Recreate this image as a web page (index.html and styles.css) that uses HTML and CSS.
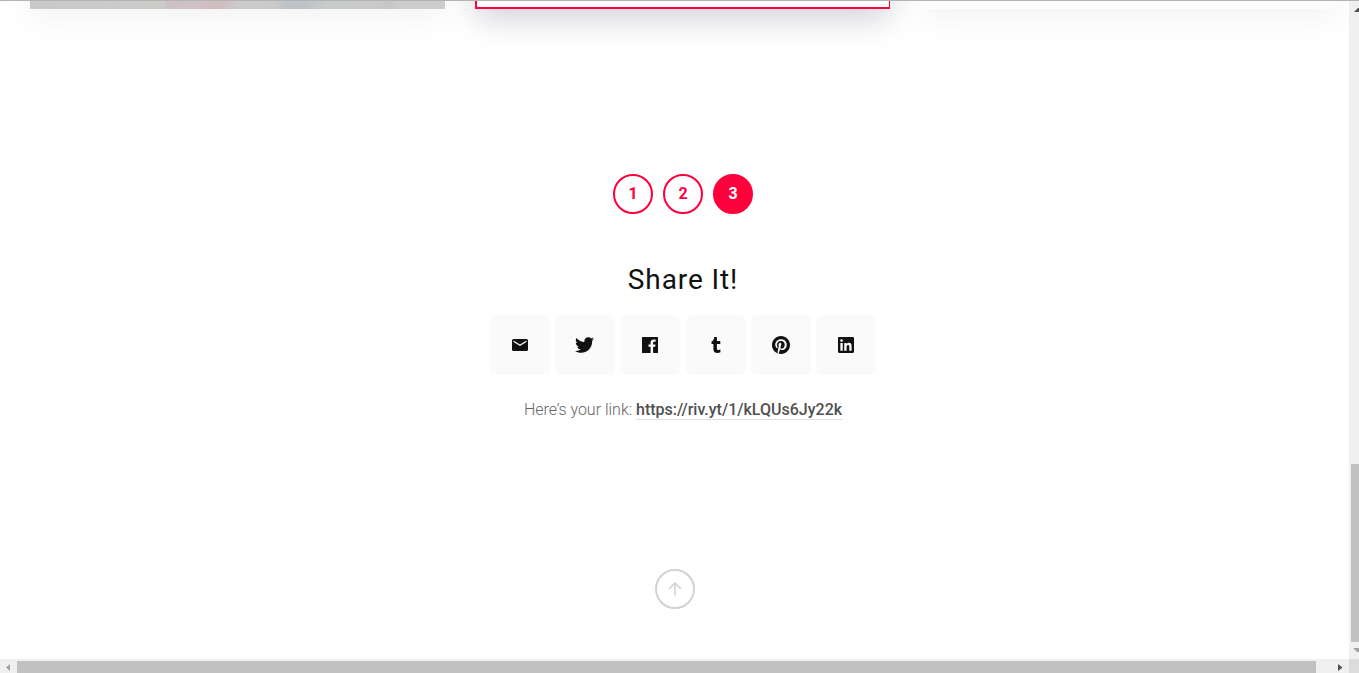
FILE: index.html
```html
<!DOCTYPE html>
<html lang="en">
  <head>
    <meta charset="UTF-8" />
    <meta name="viewport" content="width=device-width, initial-scale=1.0" />
    <title>Share It!</title>
    <link rel="stylesheet" href="styles.css">
  </head>
  <body>
    <div class="window">
      <main class="page">
        <div class="content">
          <section class="cards">
            <div class="card card-image"></div>
            <div class="card card-active"></div>
            <div class="card"></div>
          </section>

          <nav class="pagination">
            <a href="#" class="page-number">1</a>
            <a href="#" class="page-number">2</a>
            <a href="#" class="page-number current">3</a>
          </nav>

          <section class="share">
            <h2>Share It!</h2>
            <div class="share-buttons">
              <a href="#" class="share-button" aria-label="Email">
                <svg width="16" height="12" viewBox="0 0 16 12"><path d="M1.500 0h13A1.500 1.500 0 0 1 16 1.500v9a1.500 1.500 0 0 1-1.500 1.500h-13A1.500 1.500 0 0 1 0 10.500v-9A1.500 1.500 0 0 1 1.500 0zM8 7.100l6.400-4V1.600L8 5.600l-6.400-4v1.500z"/></svg>
              </a>
              <a href="#" class="share-button" aria-label="Twitter">
                <svg width="20" height="20" viewBox="1.500 1.500 22 22"><path d="M22.460 6c-.77.350-1.600.580-2.460.690.880-.530 1.560-1.370 1.880-2.380-.83.500-1.750.850-2.720 1.050C18.370 4.500 17.260 4 16 4c-2.350 0-4.270 1.920-4.270 4.290 0 .340.040.670.110.980C8.280 9.090 5.110 7.380 3 4.790c-.37.630-.58 1.370-.58 2.150 0 1.490.75 2.810 1.910 3.560-.71 0-1.370-.2-1.950-.5v.030c0 2.080 1.480 3.820 3.440 4.210a4.220 4.220 0 0 1-1.930.070 4.280 4.280 0 0 0 4 2.980 8.521 8.521 0 0 1-5.330 1.840c-.34 0-.68-.02-1.020-.06C3.440 20.290 5.700 21 8.120 21 16 21 20.330 14.460 20.330 8.790c0-.19 0-.37-.01-.56.840-.6 1.560-1.360 2.140-2.230z"/></svg>
              </a>
              <a href="#" class="share-button" aria-label="Facebook">
                <svg width="16" height="16" viewBox="0 0 16 16"><path d="M.5 0h15a.5.5 0 0 1 .5.500v15a.5.5 0 0 1-.5.500H11.100V9.800h2.100l.3-2.400h-2.400V5.900c0-.7.200-1.200 1.200-1.200h1.300V2.500c-.2 0-1-.1-1.900-.1-1.900 0-3.100 1.100-3.100 3.200v1.800H6.500v2.400h2.100V16H.5a.5.5 0 0 1-.5-.5V.500A.5.5 0 0 1 .5 0z"/></svg>
              </a>
              <a href="#" class="share-button" aria-label="Tumblr">
                <svg width="16" height="16" viewBox="0 0 16 16"><path d="M6.200 0h2.700v4h3.400v3H8.900v4.300c0 1.300.5 1.800 1.500 1.800.8 0 1.400-.2 2-.5v2.700c-.8.400-1.800.7-3 .7-2.600 0-4-1.300-4-3.900V7H3.500V4.500C5.200 4 6 2.700 6.200 0z"/></svg>
              </a>
              <a href="#" class="share-button" aria-label="Pinterest">
                <svg width="18" height="18" viewBox="0 0 24 24"><path d="M12 0C5.370 0 0 5.370 0 12c0 5.080 3.160 9.420 7.620 11.170-.1-.95-.2-2.410.040-3.440l1.410-5.960s-.36-.72-.36-1.780c0-1.670.97-2.920 2.170-2.920 1.020 0 1.520.77 1.520 1.690 0 1.030-.66 2.570-1 3.990-.28 1.200.6 2.170 1.780 2.170 2.130 0 3.770-2.250 3.770-5.490 0-2.870-2.060-4.880-5.010-4.880-3.410 0-5.410 2.560-5.410 5.200 0 1.030.4 2.130.890 2.730.1.120.110.220.080.340l-.33 1.360c-.05.220-.17.270-.4.160-1.500-.7-2.440-2.890-2.440-4.650 0-3.780 2.750-7.260 7.930-7.260 4.160 0 7.400 2.970 7.400 6.930 0 4.140-2.610 7.460-6.230 7.460-1.220 0-2.360-.63-2.750-1.380l-.75 2.850c-.27 1.040-1 2.350-1.490 3.150C9.570 23.810 10.760 24 12 24c6.630 0 12-5.370 12-12S18.630 0 12 0z"/></svg>
              </a>
              <a href="#" class="share-button" aria-label="LinkedIn">
                <svg width="16" height="16" viewBox="0 0 24 24"><path d="M20.450 20.450h-3.560v-5.570c0-1.330-.02-3.040-1.850-3.040-1.850 0-2.130 1.450-2.130 2.940v5.670H9.350V9h3.420v1.560h.050c.47-.9 1.630-1.850 3.370-1.850 3.600 0 4.260 2.370 4.260 5.460v6.280zM5.340 7.430a2.060 2.060 0 1 1 0-4.130 2.060 2.060 0 0 1 0 4.130zm1.780 13.020H3.560V9h3.560v11.450zM22.220 0H1.770C.79 0 0 .77 0 1.730v20.540C0 23.230.79 24 1.770 24h20.450c.98 0 1.780-.77 1.780-1.730V1.730C24 .77 23.200 0 22.220 0z"/></svg>
              </a>
            </div>
            <p class="share-link">Here’s your link: <a href="#">https://riv.yt/1/kLQUs6Jy22k</a></p>
          </section>
        </div>

        <a href="#" class="back-to-top" aria-label="Back to top">
          <svg width="14" height="14" viewBox="0 0 14 14"><path d="M7 13.500V1.200M1 7l6-6 6 6"/></svg>
        </a>
      </main>

      <div class="scrollbar-y">
        <svg class="arrow" width="10" height="16"><path d="M5 11h5V7H9z"/></svg>
        <div class="thumb"></div>
        <svg class="arrow disabled" width="10" height="17"><path d="M4 6h6v4H8z"/></svg>
      </div>
      <div class="scrollbar-x">
        <svg class="arrow disabled" width="17" height="14"><path d="M10 5v7L6 8.500z"/></svg>
        <div class="thumb"></div>
        <svg class="arrow" width="17" height="14"><path d="M6 5v7l4.500-3.500z"/></svg>
      </div>
      <div class="corner"></div>
    </div>
  </body>
</html>
```
FILE: styles.css
```css
* {
  box-sizing: border-box;
}

body {
  margin: 0;
  font-family: Roboto, "Liberation Sans", sans-serif;
  font-size: 16px;
  color: #111;
  background-color: #fff;
  overflow: hidden;
}

a {
  color: inherit;
  text-decoration: none;
}

svg {
  display: block;
}

.window {
  display: grid;
  grid-template-columns: 1fr 10px;
  grid-template-rows: 1fr 14px;
  height: 100vh;
  border-top: 1px solid #b3b3b3;
  overflow: hidden;
}

.page {
  display: flex;
  flex-direction: column;
  align-items: center;
  overflow: hidden;
}

.content {
  width: 1366px;
  align-self: flex-start;
  display: flex;
  flex-direction: column;
  align-items: center;
}

/* only the bottom edge of the cards is in view */
.cards {
  display: flex;
  gap: 30.4px;
  align-items: flex-end;
  align-self: stretch;
  height: 8px;
  padding-left: 30px;
}

.card {
  flex: none;
  width: 415px;
  height: 300px;
  background-color: #fdfdfd;
  box-shadow: 0 10px 30px rgba(0, 0, 0, 0.05);
}

.card-image {
  background: linear-gradient(
    to right,
    #c9c9c9,
    #cbcbca 110px,
    #cccbc9 134px,
    #cdc0c4 137px,
    #cfc3c6 165px,
    #cfbcc1 180px,
    #cfbfc2 195px,
    #cbcbcb 208px,
    #cacaca 246px,
    #bdc4c8 255px,
    #bcc4c8 275px,
    #c8cbcb 296px,
    #c9cac9 350px,
    #c4c6c8 360px,
    #cdcdcd 370px
  );
}

.card-active {
  background-color: #fff;
  border: 2px solid #ff003c;
  border-right-width: 1px;
  box-shadow: 0 10px 30px rgba(10, 10, 40, 0.18);
}

.pagination {
  display: flex;
  gap: 10px;
  margin-top: 165px;
}

.page-number {
  display: flex;
  align-items: center;
  justify-content: center;
  width: 40px;
  height: 40px;
  padding-bottom: 2px;
  border: 2px solid #ff003c;
  border-radius: 50%;
  color: #ff003c;
  font-weight: 700;
}

.page-number.current {
  background-color: #ff003c;
  color: #fff;
}

.share {
  display: flex;
  flex-direction: column;
  align-items: center;
  margin-top: 49px;
}

.share h2 {
  margin: 0;
  font-size: 28px;
  font-weight: 400;
  line-height: 34px;
  letter-spacing: 0.9px;
}

.share-buttons {
  display: flex;
  gap: 5.25px;
  margin-top: 18px;
}

.share-button {
  display: flex;
  align-items: center;
  justify-content: center;
  width: 60px;
  height: 60px;
  border-radius: 6px;
  background-color: #fafafa;
  fill: #111;
}

.share-link {
  margin: 25px 0 0;
  font-weight: 300;
  line-height: 20px;
  color: #666;
}

.share-link a {
  font-weight: 500;
  color: #505050;
  border-bottom: 1px solid #ddd;
}

.back-to-top {
  display: flex;
  align-items: center;
  justify-content: center;
  width: 40px;
  height: 40px;
  margin-top: 149px;
  border: 2px solid #d2d2d2;
  border-radius: 50%;
  fill: none;
  stroke: #d2d2d2;
  stroke-width: 1.6;
}

.scrollbar-y {
  display: flex;
  flex-direction: column;
  background-color: #f0f0f0;
}

.scrollbar-y .thumb {
  height: 178px;
  margin: auto 0 0 2px;
  background-color: #c1c1c1;
}

.scrollbar-x {
  display: flex;
  background-color: #f0f0f0;
}

.scrollbar-x .thumb {
  width: 1299px;
  height: 12px;
  margin: 2px auto 0 0;
  background-color: #c1c1c1;
}

.arrow {
  fill: #505050;
}

.arrow.disabled {
  fill: #a3a3a3;
}

.corner {
  background-color: #dcdcdc;
}
```
